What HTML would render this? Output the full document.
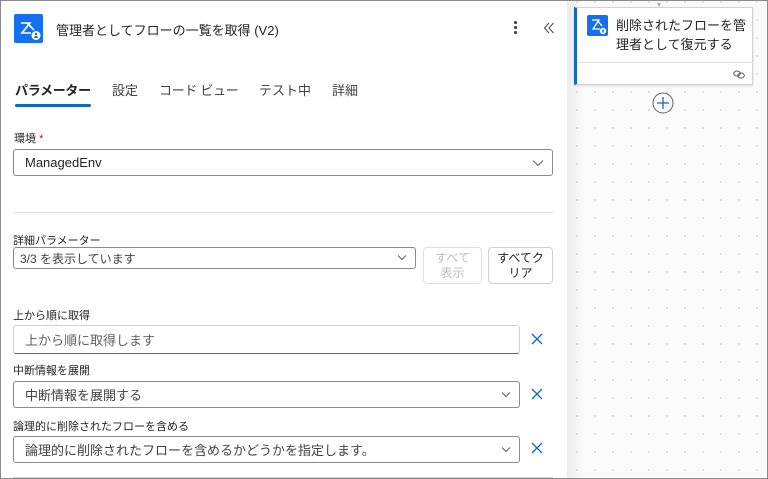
<!DOCTYPE html>
<html><head><meta charset="utf-8"><style>
*{box-sizing:border-box;margin:0;padding:0}
body{width:768px;height:479px;overflow:hidden;background:#fff;font-family:"Liberation Sans","Noto Sans CJK JP",sans-serif;color:#242424;position:relative}
.a{position:absolute}
.frame{position:absolute;left:0;top:0;width:768px;height:479px;border:1px solid #8a8a8a;pointer-events:none}
.canvas{left:567px;top:0;width:201px;height:479px;background-color:#fafafa;background-image:radial-gradient(circle,#d0d0d0 0.7px,transparent 1px),linear-gradient(to right,#ececec,#fafafa 16px);background-size:18px 18px,100% 100%;background-position:1px 11px,0 0}
.lbl{font-size:11px;color:#242424}
.box{border:1px solid #8a8a8a;border-radius:3px;background:#fff;font-size:13px;color:#424242;padding-left:11px;display:flex;align-items:center}
.chev{position:absolute;right:8px;top:50%;margin-top:-4px}
</style></head><body>
<div class="a canvas"></div>
<div class="a" style="left:657px;top:0;width:10px;height:4px;color:#aaa;font-size:8px">▾</div>
<div class="a" style="left:574px;top:7px;width:179px;height:78px;background:#fff;border:1px solid #d1d1d1;border-left:3px solid #0f6cbd;box-shadow:0 1px 2px rgba(0,0,0,.12)">
 <div class="a" style="left:10px;top:7px;width:21px;height:21px;background:#1570ef;border-radius:2px">
  <svg width="21" height="21" viewBox="0 0 21 21"><path d="M5 5h7l-6 9h7M10 5l5 6" stroke="#fff" stroke-width="1.3" fill="none"/><circle cx="16" cy="16" r="3.2" fill="#fff"/><rect x="15.2" y="14.5" width="1.6" height="3" fill="#1570ef"/></svg>
 </div>
 <div class="a" style="left:39px;top:8px;width:132px;font-size:13px;line-height:19px;color:#242424;white-space:nowrap">削除されたフローを管<br>理者として復元する</div>
 <div class="a" style="left:0;top:54px;width:176px;border-top:1px solid #e0e0e0"></div>
 <svg class="a" style="left:156px;top:62px" width="12" height="9" viewBox="0 0 12 9"><ellipse cx="4" cy="3.5" rx="3.3" ry="2.5" fill="none" stroke="#555" stroke-width="1"/><ellipse cx="8" cy="5.5" rx="3.3" ry="2.5" fill="none" stroke="#555" stroke-width="1"/></svg>
</div>
<svg class="a" style="left:652px;top:92px" width="22" height="22" viewBox="0 0 22 22"><circle cx="11" cy="11" r="10" fill="#fff" stroke="#616161" stroke-width="1"/><path d="M11 5v12M5 11h12" stroke="#0f6cbd" stroke-width="1.3"/></svg>

<div class="a" style="left:0;top:0;width:567px;height:479px;background:#fff"></div>
<div class="a" style="left:14px;top:14px;width:29px;height:29px;background:#1570ef;border-radius:2px">
 <svg width="29" height="29" viewBox="0 0 29 29"><path d="M7 9h9l-8 10h9M13 9l7 7" stroke="#fff" stroke-width="1.6" fill="none"/><circle cx="22" cy="21.5" r="4.5" fill="#fff"/><circle cx="22" cy="20" r="1.3" fill="#1570ef"/><path d="M19.8 24a2.2 2 0 0 1 4.4 0z" fill="#1570ef"/></svg>
</div>
<div class="a" style="left:56px;top:20px;font-size:13px;color:#242424">管理者としてフローの一覧を取得 (V2)</div>
<div class="a" style="left:514px;top:21px;width:3px">
 <div style="width:2.5px;height:2.5px;background:#424242;border-radius:50%;margin-bottom:2.5px"></div><div style="width:2.5px;height:2.5px;background:#424242;border-radius:50%;margin-bottom:2.5px"></div><div style="width:2.5px;height:2.5px;background:#424242;border-radius:50%"></div>
</div>
<svg class="a" style="left:543px;top:22px" width="12" height="12" viewBox="0 0 12 12"><path d="M6 1L1.5 6 6 11M10.5 1L6 6l4.5 5" stroke="#424242" stroke-width="1" fill="none"/></svg>

<div class="a" style="left:15px;top:80px;font-size:13px;font-weight:bold;color:#242424;letter-spacing:-0.3px">パラメーター</div>
<div class="a" style="left:15px;top:104px;width:76px;height:3px;background:#0f6cbd;border-radius:2px"></div>
<div class="a" style="left:112px;top:80px;font-size:13px;color:#424242">設定</div>
<div class="a" style="left:159px;top:80px;font-size:13px;color:#424242;letter-spacing:-0.3px">コード ビュー</div>
<div class="a" style="left:259px;top:80px;font-size:13px;color:#424242">テスト中</div>
<div class="a" style="left:332px;top:80px;font-size:13px;color:#424242">詳細</div>

<div class="a lbl" style="left:14px;top:130px">環境 <span style="color:#c50f1f">*</span></div>
<div class="a box" style="left:13px;top:149px;width:540px;height:27px;color:#242424">ManagedEnv
 <svg class="chev" width="12" height="8" viewBox="0 0 12 8"><path d="M1 1.5l5 5 5-5" stroke="#616161" fill="none"/></svg></div>
<div class="a" style="left:13px;top:212px;width:540px;border-top:1px solid #e0e0e0"></div>

<div class="a lbl" style="left:13px;top:232px">詳細パラメーター</div>
<div class="a box" style="left:13px;top:247px;width:403px;height:22px;font-size:12px;padding-left:6px;color:#424242">3/3 を表示しています
 <svg class="chev" width="10" height="7" viewBox="0 0 10 7"><path d="M1 1.5l4 4 4-4" stroke="#616161" fill="none"/></svg></div>
<div class="a" style="left:423px;top:247px;width:59px;height:37px;border:1px solid #e0e0e0;border-radius:4px;font-size:12px;color:#bdbdbd;text-align:center;line-height:15px;padding-top:3px">すべて<br>表示</div>
<div class="a" style="left:488px;top:247px;width:65px;height:37px;border:1px solid #d1d1d1;border-radius:4px;font-size:12px;color:#242424;text-align:center;line-height:15px;padding-top:3px">すべてク<br>リア</div>

<div class="a lbl" style="left:13px;top:307px">上から順に取得</div>
<div class="a box" style="left:13px;top:325px;width:507px;height:29px;border-color:#d1d1d1;border-bottom-color:#616161;color:#616161">上から順に取得します</div>
<svg class="a" style="left:531px;top:333px" width="12" height="12" viewBox="0 0 12 12"><path d="M1 1l10 10M11 1L1 11" stroke="#0f6cbd" stroke-width="1.3"/></svg>

<div class="a lbl" style="left:13px;top:362px">中断情報を展開</div>
<div class="a box" style="left:13px;top:381px;width:507px;height:27px;color:#424242">中断情報を展開する
 <svg class="chev" width="10" height="7" viewBox="0 0 10 7"><path d="M1 1.5l4 4 4-4" stroke="#616161" fill="none"/></svg></div>
<svg class="a" style="left:531px;top:388px" width="12" height="12" viewBox="0 0 12 12"><path d="M1 1l10 10M11 1L1 11" stroke="#0f6cbd" stroke-width="1.3"/></svg>

<div class="a lbl" style="left:13px;top:418px">論理的に削除されたフローを含める</div>
<div class="a box" style="left:13px;top:436px;width:507px;height:27px;color:#424242">論理的に削除されたフローを含めるかどうかを指定します。
 <svg class="chev" width="10" height="7" viewBox="0 0 10 7"><path d="M1 1.5l4 4 4-4" stroke="#616161" fill="none"/></svg></div>
<svg class="a" style="left:531px;top:442px" width="12" height="12" viewBox="0 0 12 12"><path d="M1 1l10 10M11 1L1 11" stroke="#0f6cbd" stroke-width="1.3"/></svg>
<div class="a" style="left:13px;top:477px;width:540px;border-top:1px solid #d1d1d1"></div>
<div class="frame"></div>
</body></html>
